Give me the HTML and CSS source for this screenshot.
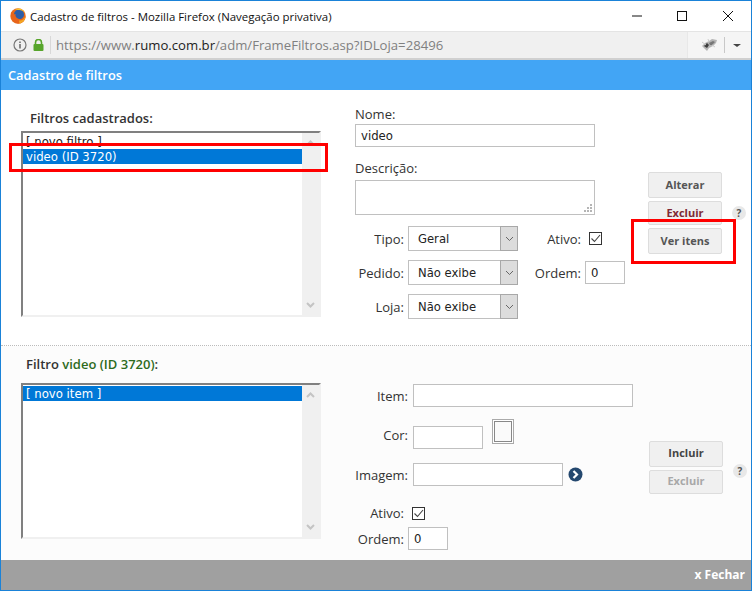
FILE: index.html
```html
<!DOCTYPE html>
<html lang="pt-BR">
<head>
    <meta charset="UTF-8">
    <meta name="viewport" content="width=device-width, initial-scale=1.0">
    <title>Cadastro de filtros</title>
    <link rel="stylesheet" href="styles.css">
</head>
<body>
    <div class="window">
        <!-- Barra de titulo -->
        <div class="titlebar">
            <svg class="fx-logo" width="16" height="16" viewBox="0 0 16 16">
                <circle cx="8" cy="8" r="7.7" fill="#e66a1c"/>
                <circle cx="9" cy="6.5" r="5" fill="#2c5ea8"/>
                <path d="M1 6 C1 11 4 15.5 8.5 15.5 C12.5 15.5 15.5 12 15.5 8 C14 10.5 11.5 11.5 9 11 C6.5 10.5 5 8.5 5.5 6 C3.5 6.5 2 6 1 3.5 Z" fill="#e8641b"/>
                <path d="M9 12.5 C12 13 14.5 11 15.5 8 C15.5 11.5 13 15 9.5 15.5 Z" fill="#f3a823"/>
                <path d="M5 1.2 C9 -0.5 13.5 1.2 15.3 5 C13.5 2.5 10.5 1.5 8 2 C7 2 6 1.7 5 1.2 Z" fill="#f7c52e"/>
            </svg>
            <span class="titlebar-text">Cadastro de filtros - Mozilla Firefox (Navegação privativa)</span>
            <svg class="win-btns" width="102" height="12" viewBox="0 0 102 12">
                <path d="M0 6 H10" stroke="#111" fill="none"/>
                <rect x="45.5" y="1.5" width="9" height="9" stroke="#111" fill="none"/>
                <path d="M91 1 L101 11 M101 1 L91 11" stroke="#111" fill="none"/>
            </svg>
        </div>

        <!-- Barra de endereco -->
        <div class="addressbar">
            <div class="url-box">
                <svg class="info-icon" width="14" height="14" viewBox="0 0 14 14">
                    <circle cx="7" cy="7" r="6" stroke="#777" stroke-width="1.2" fill="none"/>
                    <path d="M7 6 V10.5 M7 3.5 V5" stroke="#666" stroke-width="1.5" fill="none"/>
                </svg>
                <svg class="lock-icon" width="11" height="12" viewBox="0 0 11 12">
                    <path d="M2.5 5 V3.5 a3 3 0 0 1 6 0 V5" stroke="#57a52b" stroke-width="1.6" fill="none"/>
                    <rect x="0.5" y="5" width="10" height="7" rx="1" fill="#57a52b"/>
                </svg>
                <span class="url-sep"></span>
                <span class="url">https://www.<b>rumo.com.br</b>/adm/FrameFiltros.asp?IDLoja=28496</span>
            </div>
            <div class="addon-box">
                <svg width="17" height="14" viewBox="0 0 17 14">
                    <path d="M1 8 L4 5 L8 3 L11 1 L16 2 L15 5 L12 8 L8 10 L6 13 L4 11 Z" fill="#b4b4b4"/>
                    <path d="M3 8 L6 5 L8 7 L6 10 Z" fill="#3c3c3c"/>
                    <path d="M8 5 L12 3 L14 4 L11 7 L9 7 Z" fill="#777"/>
                    <path d="M1 4 L5 7 M7 1 L8 4 M14 9 L11 7" stroke="#ccc" fill="none"/>
                </svg>
                <span class="addon-sep"></span>
                <span class="addon-caret"></span>
            </div>
        </div>

        <div class="header">Cadastro de filtros</div>

        <!-- Filtros -->
        <div class="section section-filtros">
            <div class="list-col">
                <div class="list-title list-title-top">Filtros cadastrados:</div>
                <div class="listbox listbox-top">
                    <div class="list-items">
                        <div class="list-item">[ novo filtro ]</div>
                        <div class="list-item selected">video (ID 3720)</div>
                    </div>
                    <div class="scrollbar">
                        <svg width="9" height="6" viewBox="0 0 9 6"><path d="M1 5 L4.5 1.5 L8 5" stroke="#c4c4c4" stroke-width="2" fill="none"/></svg>
                        <svg width="9" height="6" viewBox="0 0 9 6"><path d="M1 1 L4.5 4.5 L8 1" stroke="#c4c4c4" stroke-width="2" fill="none"/></svg>
                    </div>
                </div>
            </div>

            <div class="form-col">
                <div class="label">Nome:</div>
                <input class="input input-nome" type="text" value="video">
                <div class="label label-desc">Descrição:</div>
                <div class="desc-wrap">
                    <textarea class="input input-desc"></textarea>
                    <svg class="grip" width="8" height="8" viewBox="0 0 8 8">
                        <path d="M6 0h2v2H6z M3 3h2v2H3z M6 3h2v2H6z M0 6h2v2H0z M3 6h2v2H3z M6 6h2v2H6z" fill="#b5b5b5"/>
                    </svg>
                </div>
                <div class="select-grid">
                    <span class="label-r">Tipo:</span>
                    <div class="select"><span class="select-text">Geral</span><span class="select-arrow"><svg width="9" height="6" viewBox="0 0 9 6"><path d="M1 1 L4.5 4.5 L8 1" stroke="#666" fill="none"/></svg></span></div>
                    <span class="label-r">Ativo:</span>
                    <span class="check check-top"><svg width="11" height="11" viewBox="0 0 11 11"><path d="M1.5 5.5 L4.5 8.5 L10 2" stroke="#444" stroke-width="1.1" fill="none"/></svg></span>

                    <span class="label-r">Pedido:</span>
                    <div class="select"><span class="select-text">Não exibe</span><span class="select-arrow"><svg width="9" height="6" viewBox="0 0 9 6"><path d="M1 1 L4.5 4.5 L8 1" stroke="#666" fill="none"/></svg></span></div>
                    <span class="label-r">Ordem:</span>
                    <input class="input input-ordem" type="text" value="0">

                    <span class="label-r">Loja:</span>
                    <div class="select"><span class="select-text">Não exibe</span><span class="select-arrow"><svg width="9" height="6" viewBox="0 0 9 6"><path d="M1 1 L4.5 4.5 L8 1" stroke="#666" fill="none"/></svg></span></div>
                </div>
            </div>

            <div class="btn-col">
                <div class="btn">Alterar</div>
                <div class="btn-row">
                    <div class="btn btn-short btn-danger">Excluir</div>
                    <span class="help">?</span>
                </div>
                <div class="btn">Ver itens</div>
            </div>
        </div>

        <!-- Itens do filtro -->
        <div class="section section-itens">
            <div class="list-col">
                <div class="list-title list-title-low">Filtro <span class="green">video (ID 3720)</span>:</div>
                <div class="listbox listbox-low">
                    <div class="list-items">
                        <div class="list-item selected">[ novo item ]</div>
                    </div>
                    <div class="scrollbar">
                        <svg width="9" height="6" viewBox="0 0 9 6"><path d="M1 5 L4.5 1.5 L8 5" stroke="#c4c4c4" stroke-width="2" fill="none"/></svg>
                        <svg width="9" height="6" viewBox="0 0 9 6"><path d="M1 1 L4.5 4.5 L8 1" stroke="#c4c4c4" stroke-width="2" fill="none"/></svg>
                    </div>
                </div>
            </div>

            <div class="form-col form-col-low">
                <div class="field">
                    <span class="field-label">Item:</span>
                    <input class="input input-item" type="text">
                </div>
                <div class="field field-cor">
                    <span class="field-label">Cor:</span>
                    <input class="input input-cor" type="text">
                    <span class="swatch"></span>
                </div>
                <div class="field field-imagem">
                    <span class="field-label">Imagem:</span>
                    <input class="input input-imagem" type="text">
                    <svg class="go-icon" width="15" height="15" viewBox="0 0 15 15">
                        <circle cx="7.5" cy="7.5" r="7" fill="#24486f"/>
                        <path d="M5.5 4 L9 7.5 L5.5 11" stroke="#fff" stroke-width="2.2" fill="none"/>
                    </svg>
                </div>
                <div class="field-sm field-ativo">
                    <span class="label-sm">Ativo:</span>
                    <span class="check check-low"><svg width="11" height="11" viewBox="0 0 11 11"><path d="M1.5 5.5 L4.5 8.5 L10 2" stroke="#444" stroke-width="1.1" fill="none"/></svg></span>
                </div>
                <div class="field-sm field-ordem">
                    <span class="label-sm">Ordem:</span>
                    <input class="input input-ordem" type="text" value="0">
                </div>
            </div>

            <div class="btn-wrap-low">
                <div class="btn-col btn-col-low">
                    <div class="btn btn-dark">Incluir</div>
                    <div class="btn btn-short btn-disabled">Excluir</div>
                </div>
                <span class="help help-low">?</span>
            </div>
        </div>

        <div class="footer">x Fechar</div>

        <!-- Marcacoes vermelhas sobre o print -->
        <div class="mark mark-list"></div>
        <div class="mark mark-btn"></div>
    </div>
</body>
</html>
```

FILE: styles.css
```css
* {
    box-sizing: border-box;
}
html, body {
    margin: 0;
    padding: 0;
}
body {
    font-family: 'Open Sans', sans-serif;
    color: #333;
    background: #fff;
}
.window {
    position: relative;
    width: 752px;
    height: 591px;
    border: 1px solid #1a82d8;
    overflow: hidden;
    display: flex;
    flex-direction: column;
}
.titlebar {
    height: 30px;
    display: flex;
    align-items: center;
    padding-left: 9px;
    background: #fff;
}
.titlebar-text {
    margin-left: 4px;
    font-size: 11.45px;
    color: #111;
}
.win-btns {
    margin-left: auto;
    margin-right: 17px;
    margin-top: -1px;
}
.addressbar {
    height: 29px;
    display: flex;
    background: #f0f0f0;
    border-top: 1px solid #e4e4e4;
    border-bottom: 2px solid #d0d0d0;
}
.url-box {
    width: 687px;
    display: flex;
    align-items: center;
    padding-left: 12px;
    border-right: 1px solid #e8e8e8;
}
.info-icon {
    flex: none;
}
.lock-icon {
    flex: none;
    margin-left: 6px;
}
.url-sep {
    width: 1px;
    height: 18px;
    margin-left: 6px;
    background: #d8d8d8;
}
.url {
    margin-left: 5px;
    font-size: 13.15px;
    color: #808080;
    white-space: nowrap;
}
.url b {
    font-weight: 400;
    color: #222;
}
.addon-box {
    flex: 1;
    display: flex;
    align-items: center;
    padding-left: 13px;
    background: #f5f5f5;
}
.addon-sep {
    width: 1px;
    height: 16px;
    margin-left: 6px;
    background: #c8c8c8;
}
.addon-caret {
    margin-left: 8px;
    border-left: 4px solid transparent;
    border-right: 4px solid transparent;
    border-top: 3px solid #444;
}
.header {
    height: 30px;
    padding-left: 7px;
    line-height: 30px;
    background: #42a5f5;
    color: #fff;
    font-size: 12.8px;
    font-weight: 600;
}
.section {
    display: flex;
    padding-left: 20px;
}
.section-filtros {
    height: 256px;
    background: #fff;
    border-bottom: 1px dotted #bbb;
}
.section-itens {
    height: 214px;
    background: #fcfcfc;
}
.list-col {
    width: 300px;
    flex: none;
}
.list-title {
    font-size: 13px;
    font-weight: 600;
    line-height: 18px;
    color: #333;
}
.list-title-top {
    margin: 19px 0 4px 9px;
}
.list-title-low {
    margin: 9px 0 10px 5px;
}
.green {
    color: #2e6b1c;
}
.listbox {
    display: flex;
    justify-content: space-between;
    border: 2px solid;
    border-color: #808080 #f0f0f0 #f0f0f0 #808080;
    background: #fff;
}
.listbox-top {
    height: 186px;
}
.listbox-low {
    height: 156px;
}
.list-items {
    width: 279px;
    padding-top: 1px;
}
.list-item {
    height: 15px;
    padding-left: 3px;
    font-family: 'DejaVu Sans', sans-serif;
    font-size: 11.7px;
    line-height: 17px;
    color: #222;
}
.list-item.selected {
    background: #0078d7;
    color: #fff;
}
.scrollbar {
    width: 17px;
    display: flex;
    flex-direction: column;
    justify-content: space-between;
    align-items: center;
    padding: 7px 0;
    background: #f0f0f0;
}
.form-col {
    width: 270px;
    flex: none;
    margin-left: 34px;
    padding-top: 15px;
}
.form-col-low {
    width: 278px;
    padding-top: 38px;
}
.label {
    font-size: 13px;
    line-height: 18px;
    color: #333;
}
.label-desc {
    margin-top: 12px;
    margin-bottom: 3px;
}
.input {
    display: block;
    height: 23px;
    padding: 1px 5px 0;
    margin: 1px 0 0;
    border: 1px solid #c0c0c0;
    border-radius: 0;
    outline: none;
    background: #fff;
    font-family: 'DejaVu Sans', sans-serif;
    font-size: 11.7px;
    color: #222;
}
.input-nome {
    width: 240px;
}
.desc-wrap {
    position: relative;
    width: 240px;
    height: 35px;
}
.input-desc {
    width: 240px;
    height: 35px;
    margin: 0;
    resize: none;
}
.grip {
    position: absolute;
    right: 3px;
    bottom: 3px;
}
.select-grid {
    display: grid;
    grid-template-columns: 49px 110px 59px auto;
    grid-auto-rows: 25px;
    column-gap: 4px;
    row-gap: 9px;
    align-items: center;
    margin-top: 11px;
}
.label-r {
    text-align: right;
    font-size: 13px;
    white-space: nowrap;
}
.select {
    height: 25px;
    display: flex;
    align-items: center;
    justify-content: space-between;
    border: 1px solid #c0c0c0;
    background: #fff;
}
.select-text {
    padding: 1px 0 0 9px;
    font-family: 'DejaVu Sans', sans-serif;
    font-size: 11.6px;
    color: #222;
}
.select-arrow {
    width: 18px;
    height: 25px;
    margin: -1px;
    display: flex;
    align-items: center;
    justify-content: center;
    background: #dcdcdc;
    border: 1px solid #a8a8a8;
}
.check {
    width: 13px;
    height: 13px;
    display: flex;
    align-items: center;
    justify-content: center;
    border: 1px solid #333;
    background: #fff;
}
.check-top {
    margin-left: 4px;
}
.check-low {
    margin-left: 4px;
}
.input-ordem {
    width: 40px;
    margin: 0;
}
.btn-col {
    display: flex;
    flex-direction: column;
    gap: 3px;
    width: 74px;
    margin-left: 23px;
    padding-top: 82px;
}
.btn-col-low {
    margin-left: 16px;
    padding-top: 95px;
}
.btn {
    width: 74px;
    height: 26px;
    flex: none;
    display: flex;
    align-items: center;
    justify-content: center;
    padding-bottom: 2px;
    background: #f0f0f0;
    border: 1px solid #ddd;
    border-radius: 2px;
    font-size: 11px;
    font-weight: 700;
    color: #555;
}
.btn-col-low .btn {
    padding-bottom: 4px;
}
.btn-short {
    height: 24px;
}
.btn-danger {
    color: #7f2a35;
}
.btn-dark {
    color: #444;
}
.btn-disabled {
    color: #a8a8a8;
}
.btn-row {
    display: flex;
    align-items: center;
    gap: 10px;
}
.help {
    width: 14px;
    height: 14px;
    flex: none;
    display: flex;
    align-items: center;
    justify-content: center;
    border-radius: 50%;
    background: #e8e8e8;
    font-size: 10px;
    font-weight: 700;
    color: #555;
}
.btn-wrap-low {
    display: flex;
    align-items: flex-start;
    gap: 10px;
}
.help-low {
    margin-top: 118px;
}
.field {
    display: flex;
    align-items: center;
    height: 23px;
}
.field-label {
    width: 53px;
    flex: none;
    margin-right: 5px;
    text-align: right;
    font-size: 13px;
}
.field .input {
    margin: 0;
}
.input-item {
    width: 220px;
}
.input-cor {
    width: 70px;
}
.input-imagem {
    width: 150px;
}
.field-cor {
    margin-top: 19px;
    align-items: flex-start;
}
.field-cor .field-label {
    line-height: 19px;
}
.swatch {
    width: 22px;
    height: 25px;
    margin: -7px 0 0 9px;
    border: 1px solid #aaa;
    box-shadow: inset 0 0 0 1px #fff, inset 0 0 0 2px #888;
    background: #fafafa;
}
.field-imagem {
    margin-top: 14px;
}
.go-icon {
    margin-left: 5px;
}
.field-sm {
    display: flex;
    align-items: center;
}
.label-sm {
    width: 49px;
    flex: none;
    margin-right: 4px;
    text-align: right;
    font-size: 13px;
}
.field-ativo {
    height: 18px;
    margin-top: 18px;
}
.field-ordem {
    margin-top: 5px;
}
.footer {
    height: 30px;
    padding-right: 6px;
    line-height: 30px;
    text-align: right;
    background: #a0a0a0;
    color: #fff;
    font-size: 12px;
    font-weight: 700;
}
.mark {
    position: absolute;
    border: 3px solid #f00;
}
.mark-list {
    left: 8px;
    top: 142px;
    width: 319px;
    height: 29px;
}
.mark-btn {
    left: 630px;
    top: 218px;
    width: 105px;
    height: 45px;
}
```
